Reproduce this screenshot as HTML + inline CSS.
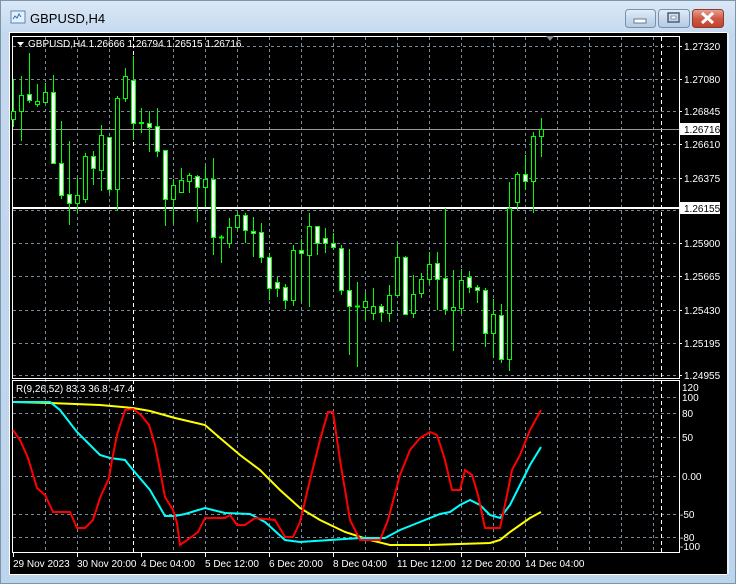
<!DOCTYPE html>
<html><head><meta charset="utf-8"><style>
html,body{margin:0;padding:0;width:736px;height:584px;overflow:hidden;background:#c9dcf0;}
svg{display:block;font-family:"Liberation Sans",sans-serif;}
</style></head><body>
<svg width="736" height="584" viewBox="0 0 736 584" xmlns="http://www.w3.org/2000/svg">
<defs>
<linearGradient id="fr" x1="0" y1="0" x2="0" y2="1"><stop offset="0" stop-color="#dbe8f6"/><stop offset="0.06" stop-color="#c4d8ee"/><stop offset="1" stop-color="#bcd4ec"/></linearGradient>
<linearGradient id="btn" x1="0" y1="0" x2="0" y2="1"><stop offset="0" stop-color="#e3edf8"/><stop offset="0.5" stop-color="#c8d9ec"/><stop offset="1" stop-color="#b4cbe4"/></linearGradient>
<linearGradient id="cls" x1="0" y1="0" x2="0" y2="1"><stop offset="0" stop-color="#e8a493"/><stop offset="0.5" stop-color="#cf5a44"/><stop offset="1" stop-color="#c0402c"/></linearGradient>
</defs>
<rect x="0" y="0" width="736" height="584" fill="url(#fr)"/>
<rect x="0.5" y="0.5" width="735" height="583" fill="none" stroke="#7d94ad"/>
<!-- title -->
<rect x="11" y="11" width="14" height="12" fill="#e6f0fa" stroke="#5a86b8"/>
<path d="M13 19 l2 -3 l2 2 l2 -4 l2 3" stroke="#2f6fb6" fill="none"/>
<text x="30" y="23" font-size="13" fill="#000">GBPUSD,H4</text>
<!-- buttons -->
<rect x="625.5" y="9.5" width="30" height="18" rx="3" fill="url(#btn)" stroke="#7891ad"/>
<rect x="634" y="19" width="12" height="4" fill="#fff" stroke="#4b5f78" stroke-width="0.8"/>
<rect x="658.5" y="9.5" width="31" height="18" rx="3" fill="url(#btn)" stroke="#7891ad"/>
<rect x="668" y="13" width="11" height="9" fill="none" stroke="#4b5f78" stroke-width="1.5"/>
<rect x="671" y="16" width="5" height="3" fill="#fff" stroke="#4b5f78" stroke-width="0.6"/>
<rect x="692.5" y="9.5" width="31" height="18" rx="3" fill="url(#cls)" stroke="#8a3b2e"/>
<path d="M702 13 l11 10 M713 13 l-11 10" stroke="#fff" stroke-width="3"/>
<!-- client -->
<rect x="9" y="32" width="718" height="543" fill="#fff"/>
<rect x="10" y="33" width="717" height="541" fill="#000"/>
<g stroke="#778899" stroke-dasharray="3,3" stroke-width="1">
<!-- price horizontal grid -->
<path d="M13 46.5H679M13 79.5H679M13 111.5H679M13 144.5H679M13 178.5H679M13 210.5H679M13 243.5H679M13 276.5H679M13 310.5H679M13 343.5H679M13 375.5H679"/>
<!-- indicator horizontal grid -->
<path d="M13 397.5H679M13 413.5H679M13 437.5H679M13 476.5H679M13 514.5H679M13 537.5H679"/>
<!-- vertical grid -->
<path d="M45.5 37V553M77.5 37V553M109.5 37V553M173.5 37V553M205.5 37V553M237.5 37V553M269.5 37V553M301.5 37V553M333.5 37V553M365.5 37V553M397.5 37V553M429.5 37V553M461.5 37V553M493.5 37V553M525.5 37V553M557.5 37V553M589.5 37V553M621.5 37V553M653.5 37V553"/>
</g>
<path d="M133.5 37V553M661.5 37V553" stroke="#fff" stroke-dasharray="4,3"/>
<!-- boxes -->
<rect x="12.5" y="36.5" width="667" height="342" fill="none" stroke="#fff"/>
<rect x="12.5" y="380.5" width="667" height="172" fill="none" stroke="#fff"/>
<!-- current price line -->
<path d="M13 129.5H679" stroke="#9a9a9a"/>
<path d="M13 208H679" stroke="#fff" stroke-width="2"/>
<!-- candles -->
<g stroke="#00ff00" stroke-width="1">
<line x1="13.5" y1="79" x2="13.5" y2="127"/><rect x="11.5" y="111.5" width="4" height="8" fill="#000"/>
<line x1="21.5" y1="76" x2="21.5" y2="141"/><rect x="19.5" y="95.5" width="4" height="16" fill="#000"/>
<line x1="29.5" y1="53" x2="29.5" y2="103"/><rect x="27.5" y="94.5" width="4" height="6" fill="#fff"/>
<line x1="37.5" y1="84" x2="37.5" y2="107"/><rect x="35.5" y="101.5" width="4" height="3" fill="#000"/>
<line x1="45.5" y1="83" x2="45.5" y2="103"/><rect x="43.5" y="92.5" width="4" height="10" fill="#000"/>
<line x1="53.5" y1="75" x2="53.5" y2="163"/><rect x="51.5" y="92.5" width="4" height="71" fill="#fff"/>
<line x1="61.5" y1="121" x2="61.5" y2="199"/><rect x="59.5" y="163.5" width="4" height="32" fill="#fff"/>
<line x1="69.5" y1="141" x2="69.5" y2="225"/><rect x="67.5" y="194.5" width="4" height="9" fill="#fff"/>
<line x1="77.5" y1="178" x2="77.5" y2="213"/><rect x="75.5" y="195.5" width="4" height="8" fill="#000"/>
<line x1="85.5" y1="153" x2="85.5" y2="203"/><rect x="83.5" y="156.5" width="4" height="43" fill="#000"/>
<line x1="93.5" y1="151" x2="93.5" y2="185"/><rect x="91.5" y="156.5" width="4" height="12" fill="#fff"/>
<line x1="101.5" y1="125" x2="101.5" y2="191"/><rect x="99.5" y="135.5" width="4" height="35" fill="#000"/>
<line x1="109.5" y1="137" x2="109.5" y2="193"/><rect x="107.5" y="137.5" width="4" height="52" fill="#fff"/>
<line x1="117.5" y1="96" x2="117.5" y2="211"/><rect x="115.5" y="98.5" width="4" height="91" fill="#000"/>
<line x1="125.5" y1="68" x2="125.5" y2="102"/><rect x="123.5" y="76.5" width="4" height="22" fill="#000"/>
<line x1="133.5" y1="56" x2="133.5" y2="140"/><rect x="131.5" y="80.5" width="4" height="43" fill="#fff"/>
<line x1="141.5" y1="108" x2="141.5" y2="133"/><rect x="139.5" y="122.5" width="4" height="1" fill="#0f0"/>
<line x1="149.5" y1="111" x2="149.5" y2="152"/><rect x="147.5" y="123.5" width="4" height="4" fill="#fff"/>
<line x1="157.5" y1="108" x2="157.5" y2="157"/><rect x="155.5" y="126.5" width="4" height="25" fill="#fff"/>
<line x1="165.5" y1="150" x2="165.5" y2="226"/><rect x="163.5" y="150.5" width="4" height="49" fill="#fff"/>
<line x1="173.5" y1="179" x2="173.5" y2="223"/><rect x="171.5" y="185.5" width="4" height="14" fill="#000"/>
<line x1="181.5" y1="168" x2="181.5" y2="192"/><rect x="179.5" y="180.5" width="4" height="12" fill="#000"/>
<line x1="189.5" y1="173" x2="189.5" y2="193"/><rect x="187.5" y="175.5" width="4" height="6" fill="#000"/>
<line x1="197.5" y1="175" x2="197.5" y2="222"/><rect x="195.5" y="176.5" width="4" height="11" fill="#fff"/>
<line x1="205.5" y1="166" x2="205.5" y2="207"/><rect x="203.5" y="179.5" width="4" height="8" fill="#000"/>
<line x1="213.5" y1="158" x2="213.5" y2="255"/><rect x="211.5" y="179.5" width="4" height="58" fill="#fff"/>
<line x1="221.5" y1="235" x2="221.5" y2="263"/><rect x="219.5" y="237" width="4" height="1" fill="#0f0"/>
<line x1="229.5" y1="218" x2="229.5" y2="248"/><rect x="227.5" y="227.5" width="4" height="16" fill="#000"/>
<line x1="237.5" y1="213" x2="237.5" y2="230"/><rect x="235.5" y="215.5" width="4" height="12" fill="#000"/>
<line x1="245.5" y1="213" x2="245.5" y2="243"/><rect x="243.5" y="215.5" width="4" height="15" fill="#fff"/>
<line x1="253.5" y1="217" x2="253.5" y2="257"/><rect x="251.5" y="231.5" width="4" height="2" fill="#fff"/>
<line x1="261.5" y1="223" x2="261.5" y2="263"/><rect x="259.5" y="232.5" width="4" height="25" fill="#fff"/>
<line x1="269.5" y1="253" x2="269.5" y2="300"/><rect x="267.5" y="257.5" width="4" height="31" fill="#fff"/>
<line x1="277.5" y1="277" x2="277.5" y2="297"/><rect x="275.5" y="282.5" width="4" height="6" fill="#fff"/>
<line x1="285.5" y1="284" x2="285.5" y2="309"/><rect x="283.5" y="287.5" width="4" height="13" fill="#fff"/>
<line x1="293.5" y1="245" x2="293.5" y2="306"/><rect x="291.5" y="250.5" width="4" height="50" fill="#000"/>
<line x1="301.5" y1="239" x2="301.5" y2="302"/><rect x="299.5" y="250.5" width="4" height="3" fill="#fff"/>
<line x1="309.5" y1="213" x2="309.5" y2="307"/><rect x="307.5" y="226.5" width="4" height="29" fill="#000"/>
<line x1="317.5" y1="226" x2="317.5" y2="255"/><rect x="315.5" y="226.5" width="4" height="17" fill="#fff"/>
<line x1="325.5" y1="228" x2="325.5" y2="253"/><rect x="323.5" y="238.5" width="4" height="5" fill="#fff"/>
<line x1="333.5" y1="233" x2="333.5" y2="250"/><rect x="331.5" y="243.5" width="4" height="4" fill="#fff"/>
<line x1="341.5" y1="245" x2="341.5" y2="295"/><rect x="339.5" y="248.5" width="4" height="42" fill="#fff"/>
<line x1="349.5" y1="249" x2="349.5" y2="355"/><rect x="347.5" y="290.5" width="4" height="16" fill="#fff"/>
<line x1="357.5" y1="282" x2="357.5" y2="367"/><rect x="355.5" y="306" width="4" height="1" fill="#0f0"/>
<line x1="365.5" y1="292" x2="365.5" y2="320"/><rect x="363.5" y="301.5" width="4" height="6" fill="#000"/>
<line x1="373.5" y1="288" x2="373.5" y2="320"/><rect x="371.5" y="306.5" width="4" height="7" fill="#000"/>
<line x1="381.5" y1="304" x2="381.5" y2="322"/><rect x="379.5" y="306.5" width="4" height="6" fill="#fff"/>
<line x1="389.5" y1="285" x2="389.5" y2="322"/><rect x="387.5" y="295.5" width="4" height="18" fill="#000"/>
<line x1="397.5" y1="243" x2="397.5" y2="296"/><rect x="395.5" y="257.5" width="4" height="38" fill="#000"/>
<line x1="405.5" y1="256" x2="405.5" y2="315"/><rect x="403.5" y="257.5" width="4" height="57" fill="#fff"/>
<line x1="413.5" y1="275" x2="413.5" y2="318"/><rect x="411.5" y="294.5" width="4" height="19" fill="#000"/>
<line x1="421.5" y1="273" x2="421.5" y2="298"/><rect x="419.5" y="279.5" width="4" height="14" fill="#000"/>
<line x1="429.5" y1="252" x2="429.5" y2="284"/><rect x="427.5" y="264.5" width="4" height="15" fill="#000"/>
<line x1="437.5" y1="252" x2="437.5" y2="310"/><rect x="435.5" y="263.5" width="4" height="16" fill="#fff"/>
<line x1="445.5" y1="208" x2="445.5" y2="315"/><rect x="443.5" y="278.5" width="4" height="31" fill="#fff"/>
<line x1="453.5" y1="270" x2="453.5" y2="351"/><rect x="451.5" y="307.5" width="4" height="3" fill="#000"/>
<line x1="461.5" y1="269" x2="461.5" y2="314"/><rect x="459.5" y="280.5" width="4" height="28" fill="#000"/>
<line x1="469.5" y1="271" x2="469.5" y2="293"/><rect x="467.5" y="277.5" width="4" height="10" fill="#fff"/>
<line x1="477.5" y1="285" x2="477.5" y2="303"/><rect x="475.5" y="287.5" width="4" height="3" fill="#fff"/>
<line x1="485.5" y1="288" x2="485.5" y2="347"/><rect x="483.5" y="290.5" width="4" height="43" fill="#fff"/>
<line x1="493.5" y1="299" x2="493.5" y2="358"/><rect x="491.5" y="314.5" width="4" height="19" fill="#000"/>
<line x1="501.5" y1="304" x2="501.5" y2="363"/><rect x="499.5" y="315.5" width="4" height="44" fill="#fff"/>
<line x1="509.5" y1="182" x2="509.5" y2="371"/><rect x="507.5" y="208.5" width="4" height="151" fill="#000"/>
<line x1="517.5" y1="172" x2="517.5" y2="210"/><rect x="515.5" y="174.5" width="4" height="28" fill="#000"/>
<line x1="525.5" y1="155" x2="525.5" y2="190"/><rect x="523.5" y="174.5" width="4" height="7" fill="#fff"/>
<line x1="533.5" y1="132" x2="533.5" y2="213"/><rect x="531.5" y="136.5" width="4" height="45" fill="#000"/>
<line x1="541.5" y1="118" x2="541.5" y2="157"/><rect x="539.5" y="129.5" width="4" height="7" fill="#000"/>
</g>
<!-- indicator lines -->
<polyline fill="none" stroke="#ffff00" stroke-width="2" points="13,402 50,403 100,405 133,408 150,411 175,418 205,425 220,438 240,455 260,470 280,490 300,508 320,520 345,532 370,540 390,545 430,545 460,544 490,543 500,540 510,532 520,525 530,518 541,512"/>
<polyline fill="none" stroke="#00ffff" stroke-width="2" points="13,402 50,402 60,410 77,432 100,455 110,458 125,460 133,470 150,490 165,516 175,516 185,514 205,508 225,513 250,514 265,522 285,540 300,542 330,540 360,538 385,538 400,530 420,522 440,514 450,512 460,505 470,500 480,505 490,515 500,518 510,505 520,485 530,465 541,447"/>
<polyline fill="none" stroke="#ff0000" stroke-width="2" points="13,430 20,440 28,458 37,488 45,495 53,512 70,512 77,528 85,528 93,520 100,498 109,478 112,460 117,435 125,410 133,409 141,415 149,425 155,445 160,470 165,497 173,510 177,523 180,545 190,538 198,532 205,518 225,518 230,515 237,525 245,525 255,518 275,520 285,537 293,537 300,522 310,480 320,440 328,412 333,412 340,460 350,520 360,540 380,540 388,520 400,475 410,450 420,438 430,432 437,435 445,460 452,490 460,490 465,470 472,475 478,495 485,528 500,528 506,500 512,470 520,455 530,430 541,410"/>
<!-- shift marker -->
<path d="M546 36 L554 36 L550 41 Z" fill="#8a8a8a"/>
<!-- text -->
<g font-size="10" fill="#fff">
<path d="M17 42 L24 42 L20.5 46 Z" fill="#fff"/>
<text x="28" y="47">GBPUSD,H4  1.26666 1.26794 1.26515 1.26716</text>
<text x="16" y="392">R(9,26,52) 83.3 36.8 -47.4</text>
<text x="684" y="50">1.27320</text>
<text x="684" y="83">1.27080</text>
<text x="684" y="115">1.26845</text>
<text x="684" y="148">1.26610</text>
<text x="684" y="182">1.26375</text>
<text x="684" y="247">1.25900</text>
<text x="684" y="280">1.25665</text>
<text x="684" y="314">1.25430</text>
<text x="684" y="347">1.25195</text>
<text x="684" y="379">1.24955</text>
<text x="682" y="391">120</text>
<text x="682" y="401">100</text>
<text x="682" y="417">80</text>
<text x="682" y="441">50</text>
<text x="682" y="480">0.00</text>
<text x="680" y="518">-50</text>
<text x="680" y="541">-80</text>
<text x="680" y="550">-100</text>
<text x="13" y="567">29 Nov 2023</text>
<text x="77" y="567">30 Nov 20:00</text>
<text x="141" y="567">4 Dec 04:00</text>
<text x="205" y="567">5 Dec 12:00</text>
<text x="269" y="567">6 Dec 20:00</text>
<text x="333" y="567">8 Dec 04:00</text>
<text x="397" y="567">11 Dec 12:00</text>
<text x="461" y="567">12 Dec 20:00</text>
<text x="525" y="567">14 Dec 04:00</text>
</g>
<g stroke="#fff"><path d="M13.5 553V557M77.5 553V557M141.5 553V557M205.5 553V557M269.5 553V557M333.5 553V557M397.5 553V557M461.5 553V557M525.5 553V557"/><path d="M679 46.5h3M679 79.5h3M679 111.5h3M679 144.5h3M679 178.5h3M679 243.5h3M679 276.5h3M679 310.5h3M679 343.5h3M679 375.5h3"/></g>
<!-- price labels -->
<rect x="680" y="123" width="40" height="12" fill="#fff"/>
<text x="684" y="133" font-size="10" fill="#000">1.26716</text>
<rect x="680" y="202" width="40" height="12" fill="#fff"/>
<text x="684" y="212" font-size="10" fill="#000">1.26155</text>
<!-- right scrollbar edge -->
<rect x="727" y="33" width="2" height="541" fill="#e8f0f8"/>
</svg>
</body></html>
